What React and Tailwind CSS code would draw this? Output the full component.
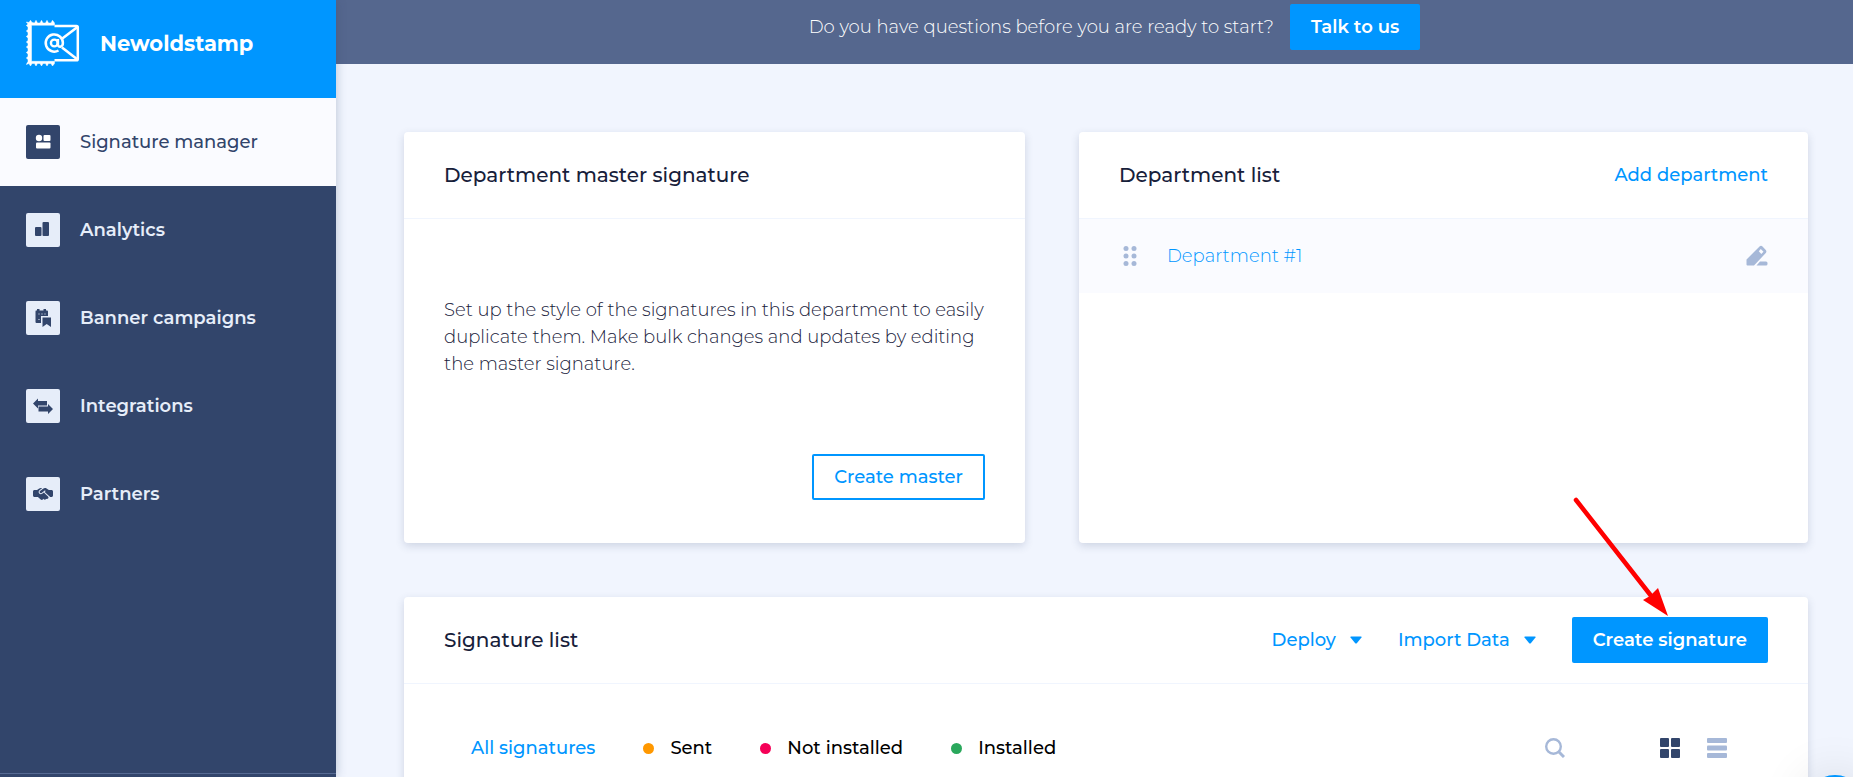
import { useState } from "react";
import { FaHandshakeSimple } from "react-icons/fa6";

const navItems = [
  { label: "Signature manager", icon: ManagerIcon },
  { label: "Analytics", icon: AnalyticsIcon },
  { label: "Banner campaigns", icon: BannerIcon },
  { label: "Integrations", icon: IntegrationsIcon },
  { label: "Partners", icon: PartnersIcon },
];

const filters = [
  { label: "All signatures" },
  { label: "Sent", dot: "bg-[#ff9800]" },
  { label: "Not installed", dot: "bg-[#f50057]" },
  { label: "Installed", dot: "bg-[#2aa85c]" },
];

function Logo() {
  return (
    <svg width="54" height="48" viewBox="0 0 54 48" fill="none" stroke="white" aria-hidden="true">
      {/* Perforated stamp edge */}
      <path
        fill="white"
        strokeWidth="0.500"
        d="M3 2.500L4.500 0.300L6 2.500L8.500 3L10 0.300L11.500 3H14L15.500 0.300L17 3H19.500L21 0.300L22.500 3H25L26.500 0.300L28.500 3V5.200H5.500V41.300H28.500V43.500L26.500 46L25 43.500H22.500L21 46L19.500 43.500H17L15.500 46L14 43.500H11.500L10 46L8.500 43.500H6L4.500 46L3 43.500L0.300 44.500L2 41.500V39.500L0.300 38L2 36.500V34L0.300 32.500L2 31V28.500L0.300 27L2 25.500V23.500L0.300 22L2 20.500V18L0.300 16.500L2 15V12.500L0.300 11L2 9.500V7L0.300 5.500L2 4L0.300 2Z"
      />
      <path d="M28.500 6H50.500Q51.800 6 51.800 7.300V39Q51.800 40.300 50.500 40.300H28.500" strokeWidth="2.500" />
      <path d="M51.500 7L36 18.700M51.500 39.500L36 27.500" strokeWidth="2.600" />
      <circle cx="28.300" cy="23" r="3.400" strokeWidth="2.400" />
      <path
        d="M31.900 19V24.500C31.900 27.800 36.900 27.500 36.900 23A8.600 8.600 0 1 0 32.500 30.500"
        strokeWidth="2.500"
      />
    </svg>
  );
}

function ManagerIcon() {
  return (
    <svg width="20" height="20" viewBox="0 0 20 20" fill="currentColor" aria-hidden="true">
      <circle cx="6" cy="6" r="3.200" />
      <rect x="10.500" y="3" width="7" height="6" rx="1" />
      <rect x="3" y="10.500" width="14.500" height="6" rx="1" />
    </svg>
  );
}

function AnalyticsIcon() {
  return (
    <svg width="20" height="20" viewBox="0 0 20 20" fill="currentColor" aria-hidden="true">
      <rect x="2" y="7" width="6.500" height="9" rx="1" />
      <rect x="9.500" y="2" width="6.500" height="14" rx="1" />
    </svg>
  );
}

function BannerIcon() {
  return (
    <svg width="20" height="20" viewBox="0 0 20 20" fill="currentColor" aria-hidden="true">
      <path d="M3 2.500H4V1H6.500V2.500H10.500V1H13V2.500H14Q15 2.500 15 3.500V8H8V15H3.500Q2.500 15 2.500 14V3.500Q2.500 2.500 3 2.500Z" />
      <path d="M9.500 9.500H18V19L13.700 16L9.500 19Z" />
      <path d="M5.500 6H6.500M8.500 6H9.500M11.500 6H12.500M5.500 11.500H6.500" stroke="#e6edf9" strokeWidth="1" />
    </svg>
  );
}

function IntegrationsIcon() {
  return (
    <svg width="22" height="18" viewBox="0 0 22 18" fill="currentColor" aria-hidden="true">
      <path d="M1 6.500L6 1.500V4H15V8.500H6V11.500Z" />
      <path d="M21 12L16 7V9.500H6.500V14.500H16V17Z" />
    </svg>
  );
}

function PartnersIcon() {
  return <FaHandshakeSimple className="h-5 w-5" aria-hidden="true" />;
}

function DragIcon() {
  return (
    <svg width="14" height="20" viewBox="0 0 14 20" fill="currentColor" aria-hidden="true">
      <circle cx="3" cy="2.500" r="2.500" />
      <circle cx="11" cy="2.500" r="2.500" />
      <circle cx="3" cy="10" r="2.500" />
      <circle cx="11" cy="10" r="2.500" />
      <circle cx="3" cy="17.500" r="2.500" />
      <circle cx="11" cy="17.500" r="2.500" />
    </svg>
  );
}

function EditIcon() {
  return (
    <svg width="22" height="22" viewBox="0 0 22 22" fill="currentColor" aria-hidden="true">
      <path
        fillRule="evenodd"
        d="M13.500 1.500Q15 0 16.500 1.500L19.800 5Q21 6.500 19.800 8L8 20.500H1.500Q0.500 20.500 0.500 19.500V14.500ZM14.800 4L12.800 6.200L15.300 9L17.500 6.800Z"
      />
      <path d="M14 16.500H20Q21.500 16.500 21.500 18V19Q21.500 20.500 20 20.500H10.500Z" />
    </svg>
  );
}

function Caret() {
  return (
    <svg width="12" height="8" viewBox="0 0 12 8" fill="currentColor" aria-hidden="true">
      <path d="M1 0.500H11Q12.300 0.500 11.500 1.500L7 7Q6 8 5 7L0.500 1.500Q-0.300 0.500 1 0.500Z" />
    </svg>
  );
}

function Sidebar({ active, onSelect }) {
  return (
    <aside className="relative z-10 flex w-[336px] shrink-0 flex-col bg-[#32456b] shadow-[0_0_10px_rgba(50,69,107,0.3)]">
      <a href="#home" className="flex h-[98px] items-start gap-5 bg-[#0096ff] pt-5 pl-[26px] text-white">
        <Logo />
        <span className="pt-2 text-[21px] leading-8 font-bold">Newoldstamp</span>
      </a>
      <nav className="flex-1">
        {navItems.map(({ label, icon: Icon }) => (
          <a
            key={label}
            href="#nav"
            onClick={() => onSelect(label)}
            className={`flex h-[88px] items-center gap-5 pl-[26px] text-lg ${
              active === label ? "bg-[#fafbff] font-medium text-[#32456b]" : "font-semibold text-[#e6edf9]"
            }`}
          >
            <span
              className={`flex h-[34px] w-[34px] items-center justify-center rounded-xs ${
                active === label ? "bg-[#32456b] text-white" : "bg-[#e6edf9] text-[#32456b]"
              }`}
            >
              <Icon />
            </span>
            {label}
          </a>
        ))}
      </nav>
      <div className="h-1 border-t border-[#566a93]" />
    </aside>
  );
}

function Card({ title, actions, className = "", children }) {
  return (
    <section className={`flex flex-col rounded-sm bg-white shadow-[0_3px_8px_rgba(50,69,107,0.18)] ${className}`}>
      <header className="flex h-[87px] shrink-0 items-center justify-between border-b border-[#f0f5fe] px-10">
        <h2 className="text-xl font-medium text-[#17203a]">{title}</h2>
        {actions}
      </header>
      {children}
    </section>
  );
}

export default function App() {
  const [active, setActive] = useState("Signature manager");
  const [filter, setFilter] = useState("All signatures");
  const [view, setView] = useState("grid");

  return (
    <div className="flex h-screen overflow-hidden bg-[#f1f5fe] font-['Montserrat','Inter',sans-serif]">
      <Sidebar active={active} onSelect={setActive} />

      <div className="flex min-w-0 flex-1 flex-col">
        {/* Top bar */}
        <div className="flex h-16 shrink-0 items-start justify-center gap-4 bg-[#55678e] pt-1 pl-10 text-white">
          <p className="text-lg leading-[46px] font-light">Do you have questions before you are ready to start?</p>
          <button className="h-[46px] rounded-xs bg-[#0096ff] px-[21px] text-lg font-semibold">Talk to us</button>
        </div>

        <main className="min-h-0 flex-1 overflow-hidden pt-[68px] pr-[45px] pl-[68px]">
          <div className="grid grid-cols-[46fr_54fr] gap-[54px]">
            <Card title="Department master signature" className="h-[411px]">
              <div className="flex flex-1 flex-col justify-between px-10 pt-[78px] pb-[43px]">
                <p className="text-lg leading-[27px] font-light text-[#17203a]">
                  Set up the style of the signatures in this department to easily duplicate them. Make bulk changes and
                  updates by editing the master signature.
                </p>
                <button className="h-[46px] self-end rounded-xs border-2 border-[#0096ff] px-5 text-lg font-medium text-[#0096ff]">
                  Create master
                </button>
              </div>
            </Card>

            <Card
              title="Department list"
              actions={<button className="text-lg font-medium text-[#0096ff]">Add department</button>}
            >
              <div className="flex h-[74px] items-center bg-[#fafbff] px-10 text-[#a6b8d8]">
                <span className="mr-[30px] pl-1">
                  <DragIcon />
                </span>
                <a href="#department" className="flex-1 text-lg font-light text-[#0096ff]">
                  Department #1
                </a>
                <button aria-label="Edit department">
                  <EditIcon />
                </button>
              </div>
            </Card>
          </div>

          <Card
            title="Signature list"
            className="relative mt-[54px] h-[400px]"
            actions={
              <div className="flex items-center text-lg font-medium text-[#0096ff]">
                <button className="mr-9 flex items-center gap-[14px]">
                  Deploy <Caret />
                </button>
                <button className="mr-9 flex items-center gap-[14px]">
                  Import Data <Caret />
                </button>
                <button className="h-[46px] rounded-xs bg-[#0096ff] px-[21px] font-semibold text-white">
                  Create signature
                </button>
                {/* Pointer to the create button */}
                <svg
                  className="pointer-events-none absolute right-[138px] bottom-full -mb-5 h-[120px] w-[98px]"
                  viewBox="0 0 98 120"
                  aria-hidden="true"
                >
                  <path d="M4 3L80 100" stroke="#ff0000" strokeWidth="4.500" strokeLinecap="round" />
                  <path d="M96 119L71 103L78 99L86 91Z" fill="#ff0000" />
                </svg>
              </div>
            }
          >
            <div className="flex items-center justify-between pt-[50px] pr-[81px] pl-[67px]">
              <div className="flex items-center gap-12 text-lg font-medium">
                {filters.map(({ label, dot }) => (
                  <button
                    key={label}
                    onClick={() => setFilter(label)}
                    className={`flex items-center gap-4 ${filter === label ? "text-[#0096ff]" : "text-black"}`}
                  >
                    {dot && <span className={`h-[11px] w-[11px] rounded-full ${dot}`} />}
                    {label}
                  </button>
                ))}
              </div>
              <div className="flex items-center text-[#a6b8d8]">
                <button aria-label="Search" className="mr-[95px]">
                  <svg width="20" height="20" viewBox="0 0 20 20" fill="none" stroke="currentColor" aria-hidden="true">
                    <circle cx="8.500" cy="8.500" r="7.300" strokeWidth="2.400" />
                    <path d="M13.500 13.500L19 19" strokeWidth="3" />
                  </svg>
                </button>
                <button
                  aria-label="Grid view"
                  onClick={() => setView("grid")}
                  className={`mr-[27px] ${view === "grid" ? "text-[#32456b]" : ""}`}
                >
                  <svg width="20" height="20" viewBox="0 0 20 20" fill="currentColor" aria-hidden="true">
                    <rect width="9" height="9" rx="1" />
                    <rect x="11" width="9" height="9" rx="1" />
                    <rect y="11" width="9" height="9" rx="1" />
                    <rect x="11" y="11" width="9" height="9" rx="1" />
                  </svg>
                </button>
                <button
                  aria-label="List view"
                  onClick={() => setView("list")}
                  className={view === "list" ? "text-[#32456b]" : ""}
                >
                  <svg width="20" height="20" viewBox="0 0 20 20" fill="currentColor" aria-hidden="true">
                    <rect width="20" height="5" rx="1" />
                    <rect y="7.500" width="20" height="5" rx="1" />
                    <rect y="15" width="20" height="5" rx="1" />
                  </svg>
                </button>
              </div>
            </div>
          </Card>
        </main>
      </div>

      {/* Chat launcher */}
      <button
        aria-label="Open chat"
        className="fixed right-[-12px] -bottom-[58px] z-20 h-[60px] w-[60px] rounded-full bg-[#0096ff] shadow-[0_0_50px_rgba(0,0,0,0.12)]"
      />
    </div>
  );
}
